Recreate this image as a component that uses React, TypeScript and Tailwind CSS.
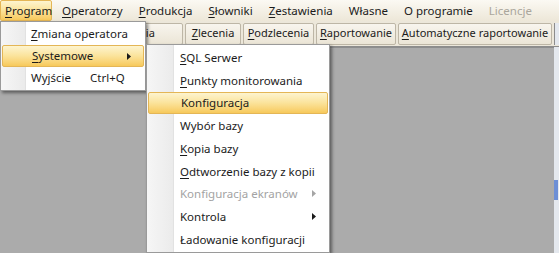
import { ReactNode } from "react";

const font = { fontFamily: '"Noto Sans", "Open Sans", sans-serif' };

// podkreślenie litery skrótu
const U = ({ children }: { children: ReactNode }) => <span className="underline underline-offset-2">{children}</span>;

const menuItems: { label: ReactNode; disabled?: boolean }[] = [
  { label: <><U>O</U>peratorzy</> },
  { label: <><U>P</U>rodukcja</> },
  { label: <><U>S</U>łowniki</> },
  { label: <><U>Z</U>estawienia</> },
  { label: <>Własne</> },
  { label: <>O programie</> },
  { label: <>Licencje</>, disabled: true },
];

const toolButtons: { label: ReactNode; w: string }[] = [
  { label: <></>, w: "w-[60px]" },
  { label: <><U>Z</U>amówienia</>, w: "w-[119px]" },
  { label: <><U>Z</U>lecenia</>, w: "w-[56px]" },
  { label: <><U>P</U>odzlecenia</>, w: "w-[71px]" },
  { label: <><U>R</U>aportowanie</>, w: "w-[80px]" },
  { label: <><U>A</U>utomatyczne raportowanie</>, w: "w-[154px]" },
];

const subItems: { label: ReactNode; disabled?: boolean; arrow?: boolean; active?: boolean }[] = [
  { label: <><U>S</U>QL Serwer</> },
  { label: <><U>P</U>unkty monitorowania</> },
  { label: <>Konfiguracja</>, active: true },
  { label: <>Wybór bazy</> },
  { label: <><U>K</U>opia bazy</> },
  { label: <><U>O</U>dtworzenie bazy z kopii</> },
  { label: <>Konfiguracja ekranów</>, disabled: true, arrow: true },
  { label: <>Kontrola</>, arrow: true },
  { label: <>Ładowanie konfiguracji</> },
];

const Arrow = ({ gray }: { gray?: boolean }) => (
  <svg width="4" height="7" viewBox="0 0 4 7" className="absolute right-[12px]">
    <path d="M0 0 L4 3.5 L0 7 Z" fill={gray ? "#a5a5a5" : "#1a1a1a"} />
  </svg>
);

const hl = "bg-gradient-to-b from-[#fdf4cf] via-[#fbe39a] to-[#f7c95a] border border-[#e4b656] rounded-[2px]";

export default function App() {
  return (
    <div className="relative w-[559px] h-[253px] overflow-hidden flex flex-col bg-[#ababab] text-[11.5px] text-[#1b1b1b] whitespace-nowrap" style={font}>
      {/* pasek menu */}
      <div className="h-[21px] flex items-stretch bg-gradient-to-b from-[#fbf9f3] to-[#ede7d8]">
        <div className={`${hl} w-[52px] flex items-center pl-[4px]`}>
          <U>P</U>rogram
        </div>
        <div className="flex items-center gap-[16px] pl-[10px]">
          {menuItems.map((m, i) => (
            <span key={i} className={m.disabled ? "text-[#aaa69c]" : ""}>{m.label}</span>
          ))}
        </div>
      </div>

      {/* pasek przycisków */}
      <div className="h-[26px] flex items-center gap-[2px] pl-[2px] bg-[#ece7da] border-b border-[#8c8c8c] text-[11px]">
        {toolButtons.map((b, i) => (
          <div key={i} className={`${b.w} shrink-0 h-[22px] flex items-center justify-center bg-gradient-to-b from-[#f8f5ee] to-[#ebe5d6] border border-[#bdb6a6] rounded-[2px]`}>
            {b.label}
          </div>
        ))}
        <div className="ml-auto w-[5px] h-[22px] border-l border-[#8c8c8c] bg-[#e4e8ee]" />
      </div>

      {/* obszar roboczy */}
      <div className="flex-1 flex">
        <div className="flex-1 bg-[#ababab] border-t border-[#8d8d8d]" />
        <div className="w-[5px] bg-[#e4e8ee] flex flex-col pt-[133px]">
          <div className="h-[20px] w-[4px] bg-[#6d8fd6]" />
        </div>
      </div>

      {/* menu Program */}
      <div className="absolute left-0 top-[21px] w-[146px] bg-white border border-[#9a9a9a] shadow-[2px_2px_3px_rgba(0,0,0,0.45)] py-[1px]">
        <div className="absolute left-0 top-0 bottom-0 w-[25px] bg-gradient-to-r from-[#f6f6f6] to-[#ebebeb] border-r border-[#e2e2e2]" />
        <div className="relative h-[22px] flex items-center pl-[30px]">
          <U>Z</U>miana operatora
        </div>
        <div className={`relative h-[22px] flex items-center pl-[29px] mx-[1px] ${hl}`}>
          <U>S</U>ystemowe
          <Arrow />
        </div>
        <div className="relative h-[22px] flex items-center pl-[30px]">
          <span className="w-[59px]">Wyjście</span>
          <span>Ctrl+Q</span>
        </div>
      </div>

      {/* podmenu Systemowe */}
      <div className="absolute left-[146px] top-[44px] w-[184px] bg-white border border-[#9a9a9a] shadow-[2px_2px_3px_rgba(0,0,0,0.45)] py-[1px]">
        <div className="absolute left-0 top-0 bottom-0 w-[27px] bg-gradient-to-r from-[#f6f6f6] to-[#ebebeb] border-r border-[#e2e2e2]" />
        {subItems.map((s, i) => (
          <div
            key={i}
            className={`relative h-[22.75px] flex items-center pl-[32px] mx-[1px] ${s.active ? hl : ""} ${s.disabled ? "text-[#a3a3a3]" : ""}`}
          >
            {s.label}
            {s.arrow && <Arrow gray={s.disabled} />}
          </div>
        ))}
      </div>
    </div>
  );
}
